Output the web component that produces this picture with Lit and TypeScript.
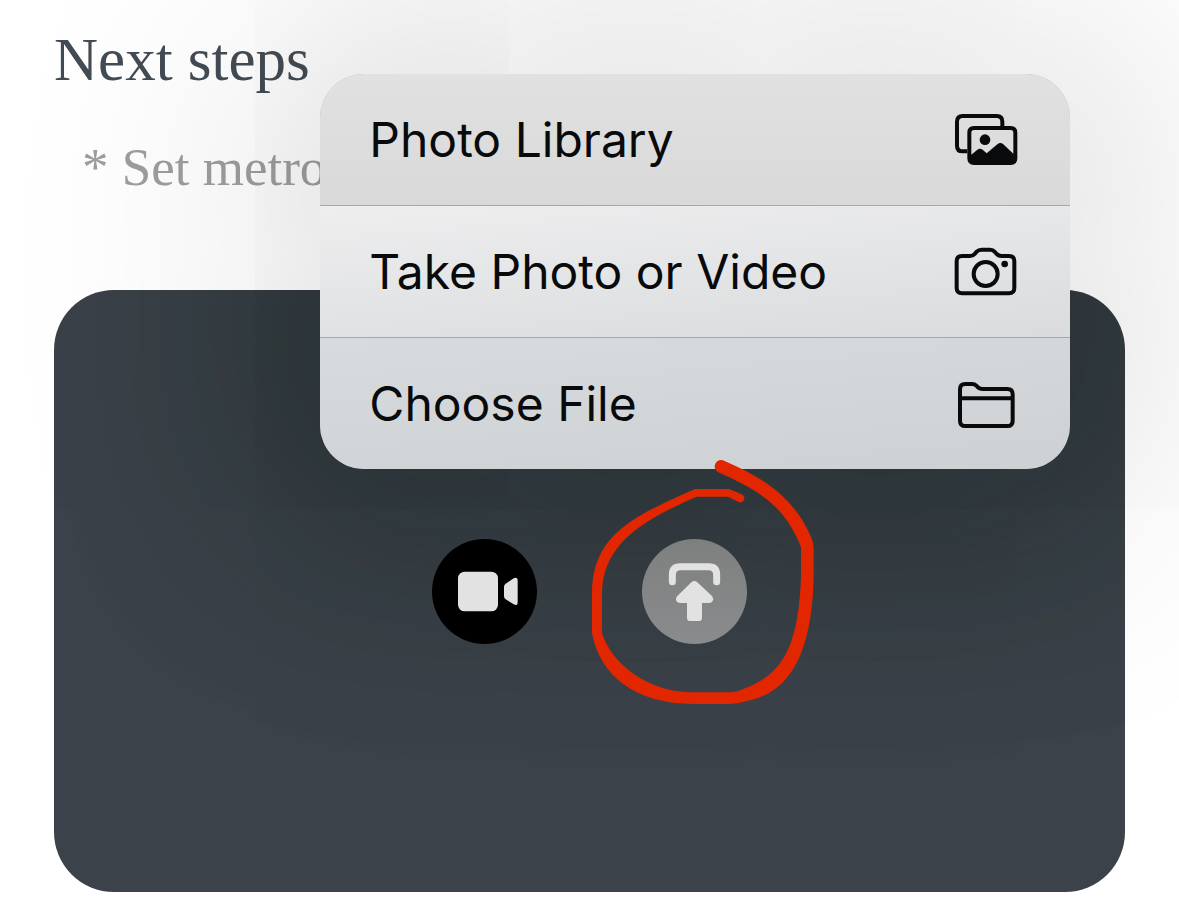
import { LitElement, html, css } from "lit";
import { customElement } from "lit/decorators.js";

const photoIcon = html`<svg viewBox="42 39 192 162" aria-hidden="true">
  <path d="M82 154H68Q51 154 51 137V65Q51 48 68 48H170Q187 48 187 65V80" fill="none" stroke="currentColor" stroke-width="12"/>
  <path fill-rule="evenodd" fill="currentColor" d="M102 78H212Q232 78 232 98V175Q232 195 212 195H102Q82 195 82 175V98Q82 78 102 78ZM102 90Q94 90 94 98V164L112 149Q120 143 128 149L140 160L172 133Q181 125 190 133L220 161V98Q220 90 212 90Z"/>
  <circle cx="135" cy="119" r="16" fill="currentColor"/>
</svg>`;

const cameraIcon = html`<svg viewBox="42 29 192 162" aria-hidden="true">
  <g fill="none" stroke="currentColor" stroke-width="12">
    <path d="M66 62H90Q99 62 104 56L110 49Q116 43 125 43H150Q159 43 164 49L170 56Q176 62 184 62H207Q223 62 223 78V158Q223 174 207 174H66Q50 174 50 158V78Q50 62 66 62Z"/>
    <circle cx="137" cy="116" r="36"/>
  </g>
  <circle cx="194" cy="86" r="10" fill="currentColor"/>
</svg>`;

const folderIcon = html`<svg viewBox="42 33 192 162" aria-hidden="true">
  <path d="M60 164V70Q60 54 76 54H96Q104 54 109 59L115 65Q120 69 128 69H202Q218 69 218 85V164Q218 180 202 180H76Q60 180 60 164ZM60 97H218" fill="none" stroke="currentColor" stroke-width="12"/>
</svg>`;

@customElement("source-menu")
class SourceMenu extends LitElement {
  static styles = css`
    :host { display: block; }
    .menu {
      display: grid;
      gap: 1px;
      overflow: hidden;
      border-radius: 44px;
      background: #a6a9ac;
    }
    .item {
      display: flex;
      align-items: center;
      justify-content: space-between;
      height: 131px;
      padding: 0 52px 0 49px;
      border: 0;
      color: #090a0b;
      font: 400 48px/60px Inter, "Liberation Sans", sans-serif;
      text-align: left;
      background: linear-gradient(#e1e1e1, #d9d9da);
    }
    .item:nth-child(2) { background: linear-gradient(175deg, #eeeeef, #d9dbdd); }
    .item:nth-child(3) { background: linear-gradient(175deg, #d8dbdd, #cdd1d4); }
    svg { width: 64px; height: 54px; }
  `;
  private items = [
    { label: "Photo Library", icon: photoIcon },
    { label: "Take Photo or Video", icon: cameraIcon },
    { label: "Choose File", icon: folderIcon },
  ];
  render() {
    return html`<div class="menu" role="menu">
      ${this.items.map((i) => html`<button class="item" role="menuitem"><span>${i.label}</span>${i.icon}</button>`)}
    </div>`;
  }
}

@customElement("app-root")
class AppRoot extends LitElement {
  static styles = css`
    :host { display: block; }
    * { box-sizing: border-box; }
    .page {
      min-height: 100vh;
      padding: 24px 54px 19px;
      overflow: hidden;
      background: #fff;
      font-family: "Liberation Serif", serif;
    }
    h1 { margin: 0; color: #434c54; font-size: 61px; font-weight: 400; line-height: 72px; }
    .step { margin: 40px 0 0; padding-left: 28px; color: #9e9e9e; font-size: 53px; line-height: 62px; }
    .stage { position: relative; margin-top: 92px; }
    .card {
      position: relative;
      display: flex;
      min-height: 602px;
      border-radius: 60px;
      overflow: hidden;
      background: #3b4249;
    }
    .shade, .popover {
      position: absolute;
      top: -216px;
      right: 55px;
      width: 70%;
      border-radius: 44px;
    }
    .shade { height: 395px; box-shadow: 0 0 190px 80px rgba(12, 28, 20, 0.28); }
    .popover { box-shadow: 0 0 250px 70px rgba(0, 0, 0, 0.13); }
    .overlay {
      position: absolute;
      inset: 0;
      display: flex;
      align-items: center;
      justify-content: center;
      gap: 105px;
      pointer-events: none;
    }
    .tool { position: relative; width: 105px; height: 105px; }
    .round {
      display: block;
      width: 105px;
      height: 105px;
      padding: 0;
      border: 0;
      border-radius: 50%;
      color: #e2e2e2;
      background: #000;
      pointer-events: auto;
    }
    .round.active { background: linear-gradient(#7e7f7f, #8a8b8c); }
    .round svg { display: block; width: 105px; height: 105px; }
    .mark { position: absolute; left: -62px; top: -89px; width: 250px; height: 265px; }
  `;

  render() {
    return html`<main class="page">
      <h1>Next steps</h1>
      <p class="step">* Set metro</p>
      <section class="stage">
        <div class="card"><div class="shade"></div></div>
        <source-menu class="popover"></source-menu>
        <div class="overlay">
          <div class="tool">
            <button class="round" aria-label="Record video">
              <svg viewBox="36 27 315 315" fill="currentColor">
                <rect x="114" y="125" width="120" height="119" rx="20"/>
                <path d="M256 162L281 145Q293 139 293 153V216Q293 230 281 223L256 207Q252 204 252 198V170Q252 165 256 162Z"/>
              </svg>
            </button>
          </div>
          <div class="tool">
            <button class="round active" aria-label="Upload">
              <svg viewBox="186 267 315 315">
                <path d="M277 395V374Q277 350 301 350H386Q410 350 410 374V395" fill="none" stroke="currentColor" stroke-width="21" stroke-linecap="round"/>
                <path fill="currentColor" d="M334 397Q343 389 352 397L396 438Q402 446 398 453Q395 459 387 459H366V503Q366 513 356 513H331Q321 513 321 503V459H299Q291 459 288 451Q286 444 292 438Z"/>
              </svg>
            </button>
            <svg class="mark" viewBox="0 0 750 795" aria-hidden="true">
              <path fill="#e22700" d="M432 32C530 75 640 130 696 268Q701 281 701 300V380C695 670 590 735 500 753Q475 762 440 762H340C170 762 60 680 36 550V430C36 250 170 195 345 117H447L485 133A12 12 0 0 1 476 156L443 140H350C190 210 68 280 66 430V550C95 640 200 727 340 727H440Q465 727 480 721C590 680 655 620 663 380V292C615 165 530 118 415 67A19 19 0 0 1 432 32Z"/>
            </svg>
          </div>
        </div>
      </section>
    </main>`;
  }
}
